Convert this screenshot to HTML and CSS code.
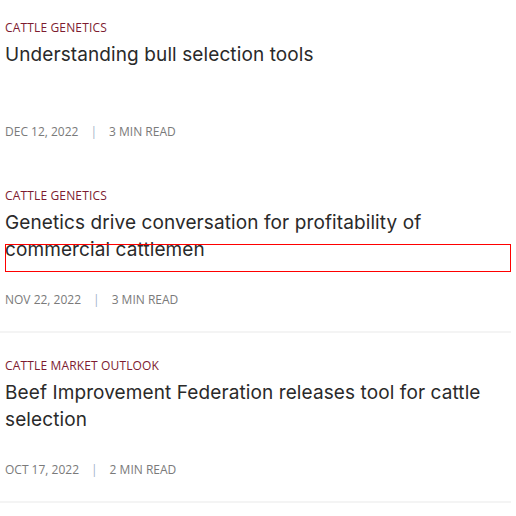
FILE: index.html
```html
<!DOCTYPE html>
<html>
<head>
<meta charset="utf-8">
<link rel="stylesheet" href="styles.css">
</head>
<body>
<div class="list">
  <article class="post first">
    <div class="cat">Cattle Genetics</div>
    <h2 class="title">Understanding bull selection tools</h2>
    <div class="meta"><span>Dec 12, 2022</span><span class="sep">|</span><span>3 min read</span></div>
  </article>
  <article class="post">
    <div class="cat">Cattle Genetics</div>
    <h2 class="title">Genetics drive conversation for profitability of commercial cattlemen<span class="focus"></span></h2>
    <div class="meta"><span>Nov 22, 2022</span><span class="sep">|</span><span>3 min read</span></div>
  </article>
  <article class="post">
    <div class="cat">Cattle Market Outlook</div>
    <h2 class="title">Beef Improvement Federation releases tool for cattle selection</h2>
    <div class="meta"><span>Oct 17, 2022</span><span class="sep">|</span><span>2 min read</span></div>
  </article>
</div>
</body>
</html>
```
FILE: styles.css
```css
html, body {
  margin: 0;
  padding: 0;
  background: #fff;
}
.list {
  width: 511px;
  display: flex;
  flex-direction: column;
}
.post {
  padding: 24px 0 22px 5px;
  border-bottom: 2px solid #f4f4f4;
}
.post.first {
  border-bottom: none;
  padding-top: 19px;
}
.cat {
  font-family: "Open Sans", sans-serif;
  font-size: 12px;
  letter-spacing: 0.15px;
  line-height: 18px;
  text-transform: uppercase;
  color: #7d1b30;
}
.title {
  position: relative;
  margin: 4px 0 0;
  font-family: "Inter", sans-serif;
  font-weight: 400;
  font-size: 19px;
  letter-spacing: 0.1px;
  line-height: 27px;
  color: #2a2a2a;
  height: 54px;
}
.focus {
  position: absolute;
  left: 0;
  right: 0;
  top: 35px;
  height: 28px;
  border: 1px solid #ff0000;
  box-sizing: border-box;
}
.meta {
  margin-top: 28px;
  font-family: "Open Sans", sans-serif;
  font-size: 12px;
  line-height: 18px;
  text-transform: uppercase;
  color: #7a7a7a;
  display: flex;
}
.sep {
  color: #9fb4c8;
  margin: 0 12px 0 12px;
}
```
